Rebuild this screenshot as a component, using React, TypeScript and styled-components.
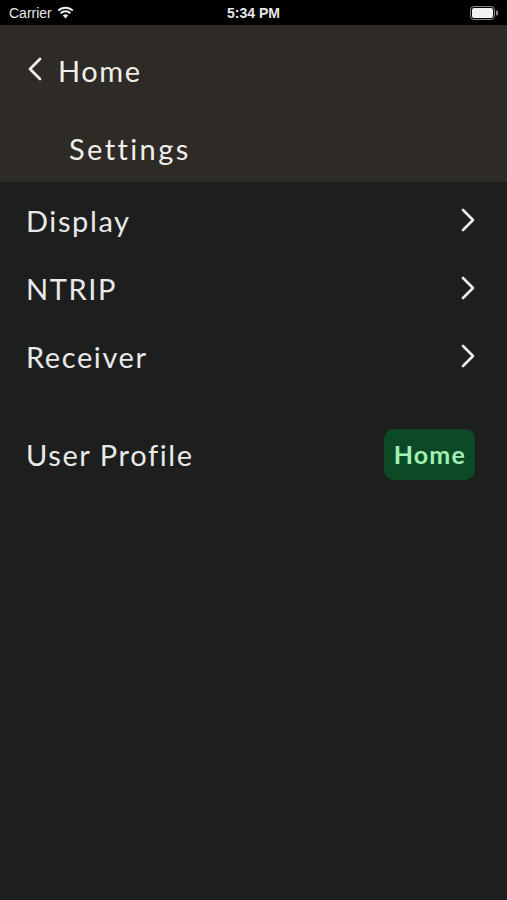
import styled, { createGlobalStyle } from "styled-components";

const GlobalStyle = createGlobalStyle`
    html, body {
        margin: 0;
        padding: 0;
        background: #1d1e1e;
    }
    body {
        font-family: Lato, "Noto Sans", sans-serif;
    }
`;

const Screen = styled.div`
    width: 507px;
    height: 900px;
    display: flex;
    flex-direction: column;
    background: #1d1e1e;
    color: #ececec;
    overflow: hidden;
`;

const StatusBar = styled.div`
    height: 25px;
    background: #000;
    display: grid;
    grid-template-columns: 1fr auto 1fr;
    align-items: center;
    padding: 0 9px;
    font-family: "Liberation Sans", Arial, sans-serif;
    font-size: 14px;
    color: #e8e8e8;
`;

const Carrier = styled.div`
    display: flex;
    align-items: center;
    gap: 5px;
`;

const Clock = styled.div`
    font-weight: bold;
    font-size: 14px;
`;

const Battery = styled.div`
    justify-self: end;
    display: flex;
    align-items: center;
`;

const Header = styled.div`
    background: #2e2a26;
    height: 157px;
    display: flex;
    flex-direction: column;
    padding: 0 0 0 27px;
`;

const BackButton = styled.div`
    display: flex;
    align-items: center;
    gap: 15px;
    height: 90px;
    font-size: 29px;
    letter-spacing: 1.6px;
    color: #eeeeea;
`;

const Title = styled.div`
    height: 66px;
    display: flex;
    align-items: center;
    font-size: 29px;
    letter-spacing: 2.4px;
    color: #eeeeea;
    padding-left: 42px;
`;

const List = styled.div`
    display: flex;
    flex-direction: column;
    padding: 4px 32px 0 26px;
`;

const Row = styled.div<{ $gap?: number }>`
    height: 68px;
    display: flex;
    align-items: center;
    justify-content: space-between;
    font-size: 29px;
    letter-spacing: 1.6px;
    color: #e9e9e9;
    margin-top: ${(p) => p.$gap ?? 0}px;
`;

const Badge = styled.div`
    background: #0b4a24;
    color: #a2f0b8;
    font-weight: bold;
    font-size: 25px;
    letter-spacing: 1.2px;
    border-radius: 10px;
    padding: 0 9px 0 10px;
    height: 51px;
    display: flex;
    align-items: center;
`;

const Chevron = () => (
    <svg width="14" height="24" viewBox="0 0 14 24">
        <path d="M2 2 L12 12 L2 22" fill="none" stroke="#efefef" strokeWidth="2.6" strokeLinecap="round" strokeLinejoin="round" />
    </svg>
);

const BackChevron = () => (
    <svg width="16" height="26" viewBox="0 0 16 26">
        <path d="M13 2 L3 12 L13 22" fill="none" stroke="#efefef" strokeWidth="2.8" strokeLinecap="round" strokeLinejoin="round" />
    </svg>
);

const App = () => {
    return (
        <Screen>
            <GlobalStyle />
            <StatusBar>
                <Carrier>
                    Carrier
                    <svg width="17" height="13" viewBox="0 0 17 13">
                        <path d="M8.5 12.5 L5.8 9.4 A4 4 0 0 1 11.2 9.4 Z" fill="#eee" />
                        <path d="M3.6 7.2 A7 7 0 0 1 13.4 7.2" fill="none" stroke="#eee" strokeWidth="2" />
                        <path d="M1.2 4.6 A10.5 10.5 0 0 1 15.8 4.6" fill="none" stroke="#eee" strokeWidth="2" />
                    </svg>
                </Carrier>
                <Clock>5:34 PM</Clock>
                <Battery>
                    <svg width="28" height="14" viewBox="0 0 28 14">
                        <rect x="0.5" y="0.5" width="24" height="13" rx="3.5" fill="none" stroke="#888" />
                        <rect x="2" y="2" width="21" height="10" rx="2" fill="#f2f2f2" />
                        <path d="M26 4.5 A2.5 2.5 0 0 1 26 9.5 Z" fill="#888" />
                    </svg>
                </Battery>
            </StatusBar>
            <Header>
                <BackButton>
                    <BackChevron />
                    Home
                </BackButton>
                <Title>Settings</Title>
            </Header>
            <List>
                <Row>
                    Display
                    <Chevron />
                </Row>
                <Row>
                    NTRIP
                    <Chevron />
                </Row>
                <Row>
                    Receiver
                    <Chevron />
                </Row>
                <Row $gap={30}>
                    User Profile
                    <Badge>Home</Badge>
                </Row>
            </List>
        </Screen>
    );
};

export default App;
